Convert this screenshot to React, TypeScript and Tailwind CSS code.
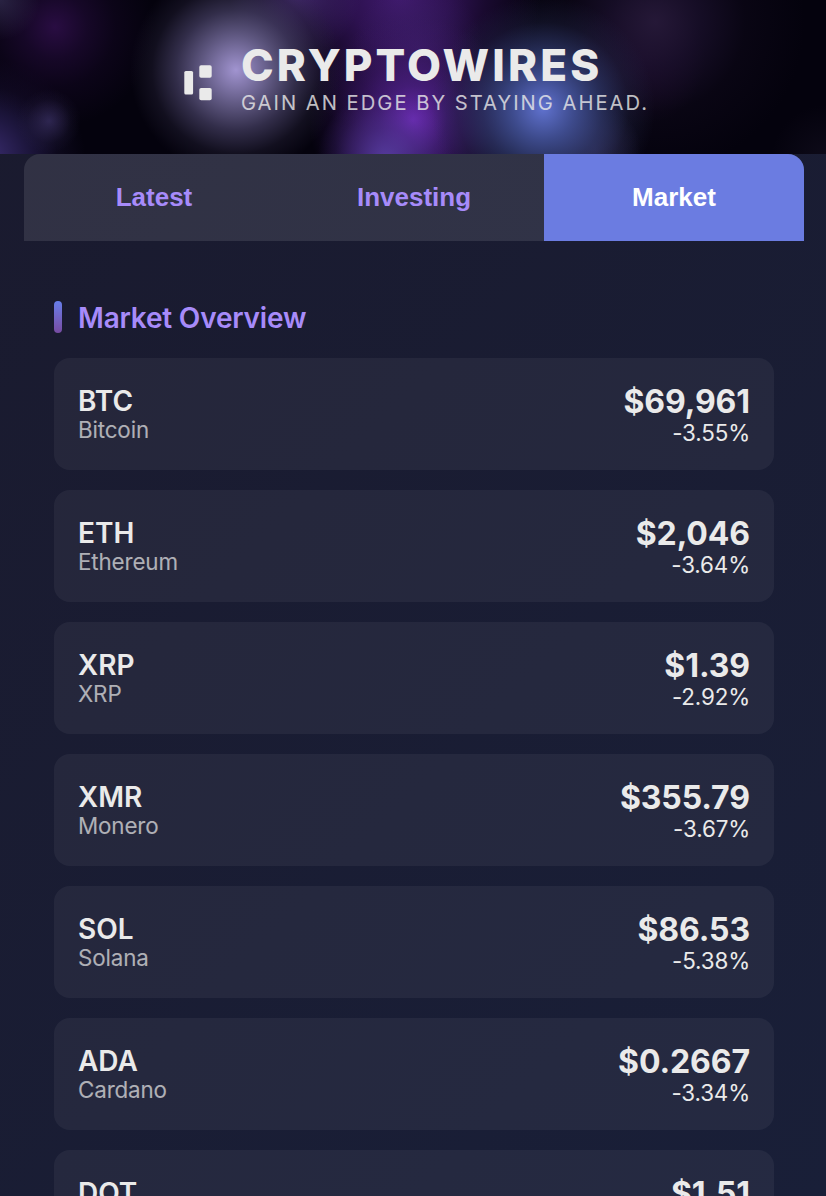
import React, { useState } from 'react';

const tabs = ['Latest', 'Investing', 'Market'];

const coins = [
  { symbol: 'BTC', name: 'Bitcoin', price: '$69,961', change: '-3.55%' },
  { symbol: 'ETH', name: 'Ethereum', price: '$2,046', change: '-3.64%' },
  { symbol: 'XRP', name: 'XRP', price: '$1.39', change: '-2.92%' },
  { symbol: 'XMR', name: 'Monero', price: '$355.79', change: '-3.67%' },
  { symbol: 'SOL', name: 'Solana', price: '$86.53', change: '-5.38%' },
  { symbol: 'ADA', name: 'Cardano', price: '$0.2667', change: '-3.34%' },
  { symbol: 'DOT', name: 'Polkadot', price: '$1.51', change: '-4.12%' }
];

// Soft light spots behind the title
const headerGlow =
  'bg-[radial-gradient(circle_at_0px_0px,#46406c80,transparent_40px),radial-gradient(circle_at_49px_121px,#443a7499,#3a306266_12px,#2f285026_22px,transparent_32px),radial-gradient(circle_at_236px_70px,#a194d0,#6b6390e6_34px,#464064b3_60px,#2c284059_84px,transparent_106px),radial-gradient(circle_at_543px_108px,#6072cf,#4656a0d9_32px,#333e74a6_60px,#252c4f4d_86px,transparent_112px),radial-gradient(circle_at_595px_150px,#443b7080,#443b704d_22px,transparent_46px),radial-gradient(circle_at_385px_160px,#5f45b0cc,#50349280_32px,#50349233_50px,transparent_68px),radial-gradient(circle_at_413px_120px,#6c2bb4,#532290b3_34px,#441a7480_60px,#441a7433_82px,transparent_104px),radial-gradient(circle_at_418px_48px,#3f246e80,transparent_65px),radial-gradient(circle_at_295px_-8px,#4e3080cc,#4e308059_35px,transparent_66px),radial-gradient(circle_at_400px_-5px,#401a6e,#371560cc_50px,#2f125280_85px,transparent_140px),radial-gradient(circle_at_655px_22px,#251837,#1d1230b3_45px,#150d224d_90px,transparent_150px),radial-gradient(circle_at_640px_60px,#2d0f3c80,transparent_65px),radial-gradient(circle_at_55px_27px,#290d42,#1e0a33b3_32px,#17082966_60px,transparent_100px),radial-gradient(circle_at_-15px_158px,#3c2e72,#2b2158b3_40px,#241b4940_72px,transparent_100px),radial-gradient(circle_at_826px_160px,#1c182c66,transparent_55px)]';

const Logo: React.FC = () => (
  <svg width="28" height="36" viewBox="0 0 28 36" fill="#eaeaea">
    <rect x="0.3" y="6" width="8.8" height="23.5" rx="1.6" />
    <rect x="15.3" y="0.3" width="12.4" height="12.4" rx="1.8" />
    <rect x="15.3" y="23" width="12.4" height="12.2" rx="1.8" />
  </svg>
);

const App: React.FC = () => {
  const [activeTab, setActiveTab] = useState('Market');

  return (
    <div className="h-[1196px] overflow-hidden bg-[linear-gradient(135deg,#1a1a2e,#191f38)] font-[Inter,sans-serif] text-[#eaeaea]">
      <header className={`flex h-[154px] items-center justify-center bg-[#04020d] pt-3 pl-[7px] ${headerGlow}`}>
        <div className="flex items-center gap-[29px]">
          <Logo />
          <div className="flex flex-col whitespace-nowrap pb-2">
            <h1 className="text-[44px] leading-[46px] font-extrabold tracking-[3.1px]">CRYPTOWIRES</h1>
            <p className="pt-px text-[20.2px] leading-7 tracking-[2px] opacity-80">GAIN AN EDGE BY STAYING AHEAD.</p>
          </div>
        </div>
      </header>

      <div className="flex w-[804px] flex-col pl-6">
        {/* Tabs */}
        <nav className="grid h-[87px] grid-cols-3 overflow-hidden rounded-t-2xl bg-white/10">
          {tabs.map((tab) => (
            <button
              key={tab}
              onClick={() => setActiveTab(tab)}
              className={`pb-px font-['Liberation_Sans',sans-serif] text-[26px] font-bold ${
                activeTab === tab ? 'bg-[#6b7ce1] text-white' : 'text-[#a78bfa]'
              }`}
            >
              {tab}
            </button>
          ))}
        </nav>

        {/* Market Overview */}
        <main className="flex flex-col gap-[25px] px-[30px] pt-[60px]">
          <div className="flex h-8 items-center gap-4">
            <div className="h-8 w-2 rounded bg-gradient-to-b from-[#667eea] to-[#764ba2]" />
            <h2 className="pt-0.5 text-[28px] leading-8 font-semibold tracking-[-0.2px] text-[#a78bfa]">Market Overview</h2>
          </div>

          <div className="flex flex-col gap-5">
            {coins.map((coin) => (
              <div key={coin.symbol} className="flex h-28 items-center justify-between rounded-2xl bg-white/5 px-6 pt-px">
                <div className="flex flex-col">
                  <span className="text-[28px] leading-[30px] font-semibold">{coin.symbol}</span>
                  <span className="text-[22.4px] leading-7 tracking-[-0.15px] opacity-70">{coin.name}</span>
                </div>
                <div className="flex flex-col pt-px text-right">
                  <span className="text-[32px] leading-[35px] font-bold tracking-[-0.1px]">{coin.price}</span>
                  <span className="text-[22.4px] leading-7 tracking-[-0.15px]">{coin.change}</span>
                </div>
              </div>
            ))}
          </div>
        </main>
      </div>
    </div>
  );
};

export default App;
